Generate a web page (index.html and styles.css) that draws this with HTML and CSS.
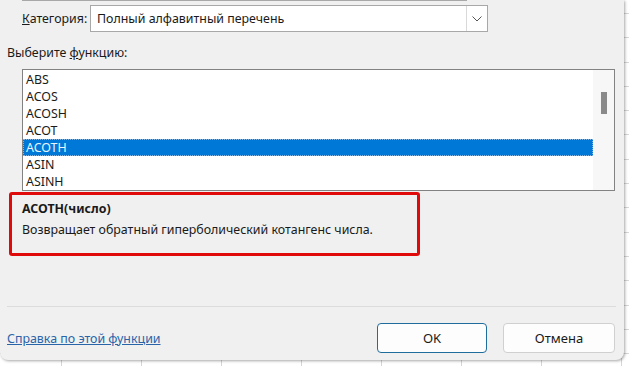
FILE: index.html
```html
<!DOCTYPE html>
<html>
<head>
    <title>Вставка функции</title>
    <meta name="viewport" content="width=device-width, initial-scale=1">
    <link rel="stylesheet" href="styles.css">
</head>
<body>
    <div class="sheet">
        <div class="dialog">
            <div class="search-edge"></div>

            <div class="category-row">
                <span class="category-label"><u>К</u>атегория:</span>
                <div class="select">
                    <span class="select-value">Полный алфавитный перечень</span>
                    <span class="select-drop">
                        <svg width="10" height="6" viewBox="0 0 10 6"><path d="M0.5 0.5 L5 5 L9.5 0.5" fill="none" stroke="#555" stroke-width="1"/></svg>
                    </span>
                </div>
            </div>

            <div class="pick-label">Выберите <u>ф</u>ункцию:</div>

            <div class="listbox">
                <ul class="items">
                    <li>ABS</li>
                    <li>ACOS</li>
                    <li>ACOSH</li>
                    <li>ACOT</li>
                    <li class="selected">ACOTH</li>
                    <li>ASIN</li>
                    <li>ASINH</li>
                </ul>
                <div class="scrollbar"><div class="thumb"></div></div>
            </div>

            <div class="info">
                <div class="signature">ACOTH(число)</div>
                <div class="description">Возвращает обратный гиперболический котангенс числа.</div>
            </div>

            <div class="separator"></div>

            <div class="footer">
                <a class="help-link" href="#">Справка по этой функции</a>
                <div class="buttons">
                    <button class="button default">OK</button>
                    <button class="button">Отмена</button>
                </div>
            </div>
        </div>
    </div>
</body>
</html>
```

FILE: styles.css
```css
body {
    margin: 0;
    font-family: "Noto Sans", "Open Sans", sans-serif;
    font-size: 12.4px;
    color: #1a1a1a;
}
.sheet {
    width: 629px;
    height: 366px;
    overflow: hidden;
    background-color: #ffffff;
    background-image:
        repeating-linear-gradient(to right, transparent 0, transparent 61px, #d6d6d6 61px, #d6d6d6 62px, transparent 62px, transparent 80px),
        repeating-linear-gradient(to bottom, transparent 0, transparent 13px, #d6d6d6 13px, #d6d6d6 14px, transparent 14px, transparent 24.3px);
}
.dialog {
    width: 624px;
    height: 360px;
    background: #f0f0f0;
    border-radius: 0 0 8px 8px;
    box-shadow: 1px 1px 3px rgba(0,0,0,0.35);
}
.search-edge {
    margin-left: 22px;
    width: 445px;
    height: 1px;
    background: #a8a8a8;
}
.category-row {
    display: flex;
    align-items: center;
    margin-top: 4px;
    padding-left: 22px;
}
.category-label {
    width: 68px;
}
.select {
    display: flex;
    width: 396px;
    height: 25px;
    border: 1px solid #a8a8a8;
    background: white;
}
.select-value {
    flex: 1;
    padding-left: 6px;
    line-height: 25px;
}
.select-drop {
    width: 20px;
    border-left: 1px solid #d9d9d9;
    display: flex;
    align-items: center;
    justify-content: center;
}
.pick-label {
    margin-top: 12px;
    padding-left: 7px;
    line-height: 17px;
}
.listbox {
    display: flex;
    margin: 8px 0 0 22px;
    width: 591px;
    height: 120px;
    border: 1px solid #828282;
    background: white;
}
.items {
    flex: 1;
    list-style: none;
    margin: 0;
    padding: 1px 0 0 0;
}
.items li {
    height: 17px;
    line-height: 17px;
    padding-left: 3px;
}
.items li.selected {
    background: #0078d7;
    color: #eaf6ff;
    outline: 1px dotted #7fb6e6;
    outline-offset: -1px;
}
.scrollbar {
    width: 21px;
    background: #f7f7f7;
    display: flex;
    justify-content: center;
}
.thumb {
    margin-top: 22px;
    width: 6px;
    height: 22px;
    background: #8a8a8a;
}
.info {
    margin: 1px 0 0 9px;
    width: 395px;
    height: 58px;
    border: 3px solid #e00a0a;
    border-radius: 3px;
    padding-left: 10px;
}
.signature {
    font-weight: bold;
    line-height: 17px;
    margin-top: 5px;
}
.description {
    line-height: 17px;
    margin-top: 4px;
}
.separator {
    margin: 50px 0 0 7px;
    width: 609px;
    height: 1px;
    background: #dcdcdc;
}
.footer {
    display: flex;
    align-items: center;
    justify-content: space-between;
    margin-top: 16px;
    padding: 0 9px 0 7px;
}
.help-link {
    color: #2a64a8;
    text-decoration: underline;
}
.buttons {
    display: flex;
    gap: 16px;
}
.button {
    width: 112px;
    height: 30px;
    font-family: inherit;
    font-size: 13px;
    color: #1a1a1a;
    background: #fdfdfd;
    border: 1px solid #d0d0d0;
    border-radius: 4px;
}
.button.default {
    width: 110px;
    border-color: #1f6d9c;
}
```
